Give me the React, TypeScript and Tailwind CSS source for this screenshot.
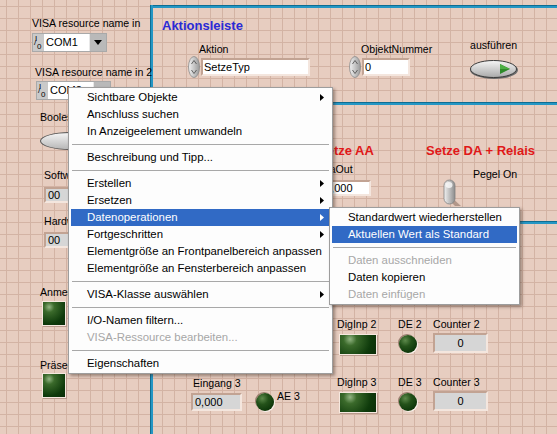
import React from "react";

type MenuEntry =
  | { kind: "item"; label: string; arrow?: boolean; active?: boolean; disabled?: boolean }
  | { kind: "sep" };

const mainMenu: MenuEntry[] = [
  { kind: "item", label: "Sichtbare Objekte", arrow: true },
  { kind: "item", label: "Anschluss suchen" },
  { kind: "item", label: "In Anzeigeelement umwandeln" },
  { kind: "sep" },
  { kind: "item", label: "Beschreibung und Tipp..." },
  { kind: "sep" },
  { kind: "item", label: "Erstellen", arrow: true },
  { kind: "item", label: "Ersetzen", arrow: true },
  { kind: "item", label: "Datenoperationen", arrow: true, active: true },
  { kind: "item", label: "Fortgeschritten", arrow: true },
  { kind: "item", label: "Elementgröße an Frontpanelbereich anpassen" },
  { kind: "item", label: "Elementgröße an Fensterbereich anpassen" },
  { kind: "sep" },
  { kind: "item", label: "VISA-Klasse auswählen", arrow: true },
  { kind: "sep" },
  { kind: "item", label: "I/O-Namen filtern..." },
  { kind: "item", label: "VISA-Ressource bearbeiten...", disabled: true },
  { kind: "sep" },
  { kind: "item", label: "Eigenschaften" },
];

const subMenu: MenuEntry[] = [
  { kind: "item", label: "Standardwert wiederherstellen" },
  { kind: "item", label: "Aktuellen Wert als Standard", active: true },
  { kind: "sep" },
  { kind: "item", label: "Daten ausschneiden", disabled: true },
  { kind: "item", label: "Daten kopieren" },
  { kind: "item", label: "Daten einfügen", disabled: true },
];

function MenuList({ entries }: { entries: MenuEntry[] }) {
  return (
    <div className="flex flex-col">
      {entries.map((entry, i) =>
        entry.kind === "sep" ? (
          <div key={i} className="flex h-[9px] items-center px-[3px]">
            <div className="h-px w-full bg-[#a8a8a8]" />
          </div>
        ) : (
          <div
            key={i}
            className={`mx-[2px] flex h-[17px] items-center justify-between pl-[16px] pr-[6px] text-[11.4px] ${
              entry.active ? "bg-[#316ac5] text-white" : entry.disabled ? "text-[#a7a7a7]" : "text-black"
            }`}
          >
            <span className="whitespace-nowrap">{entry.label}</span>
            {entry.arrow ? (
              <svg width="4" height="7" viewBox="0 0 4 7">
                <path d="M0 0 L4 3.5 L0 7 Z" fill={entry.active ? "#fff" : "#000"} />
              </svg>
            ) : null}
          </div>
        )
      )}
    </div>
  );
}

function Spin() {
  return (
    <svg width="12" height="22" viewBox="0 0 12 22">
      <defs>
        <linearGradient id="spg" x1="0" x2="1">
          <stop offset="0" stopColor="#f2f2f2" />
          <stop offset="1" stopColor="#9a9a9a" />
        </linearGradient>
      </defs>
      <ellipse cx="6" cy="11" rx="5.5" ry="10.5" fill="url(#spg)" stroke="#8a8a8a" strokeWidth="0.8" />
      <path d="M3.5 8 L6 4.5 L8.5 8" fill="none" stroke="#555" strokeWidth="0.9" />
      <path d="M3.5 14 L6 17.5 L8.5 14" fill="none" stroke="#555" strokeWidth="0.9" />
    </svg>
  );
}

function VisaControl({ text }: { text: string }) {
  return (
    <div className="flex h-[19px] w-max shrink-0 border border-[#a9a9a9] bg-[#c9c9c9]">
      <div className="relative w-[11px] text-[8px] leading-none text-black">
        <span className="absolute left-[2px] top-[1px]">I</span>
        <span className="absolute left-[1px] top-[5px]">/</span>
        <span className="absolute left-[4px] top-[9px]">0</span>
      </div>
      <div className="flex w-[45px] items-center bg-white pl-[2px] text-[11px]">{text}</div>
      <div className="flex w-[17px] items-center justify-center border-l border-[#e8e8e8] bg-[#b9b9b9]">
        <svg width="8" height="5" viewBox="0 0 8 5">
          <path d="M0 0 L8 0 L4 5 Z" fill="#000" />
        </svg>
      </div>
    </div>
  );
}

function SquareLed({ className }: { className: string }) {
  return (
    <div
      className={`shrink-0 border border-[#f6e8df] bg-[radial-gradient(circle_at_28%_22%,#93b583_0%,#3b6a2b_22%,#0e3a0b_70%,#0a2d08_100%)] shadow-[1px_1px_0_#b89a8c] ${className}`}
    />
  );
}

function RoundLed() {
  return (
    <div className="h-[18px] w-[18px] shrink-0 rounded-full bg-[radial-gradient(circle_at_35%_30%,#5d8a4b_0%,#24521a_35%,#0a3308_80%)] shadow-[1px_1px_0_#f8f0ea,-1px_-1px_0_#9c7e70]" />
  );
}

function Box({ children, className, white }: { children: React.ReactNode; className: string; white?: boolean }) {
  return (
    <div
      className={`flex shrink-0 items-center border-2 border-b-[#f4e6de] border-l-[#c2a393] border-r-[#f4e6de] border-t-[#c2a393] text-[11px] ${
        white ? "bg-white pl-[1px]" : "bg-[#d6d6d6]"
      } ${className}`}
    >
      {children}
    </div>
  );
}

function Label({ children, className = "" }: { children: React.ReactNode; className?: string }) {
  return <div className={`whitespace-nowrap text-[10.6px] leading-[13px] ${className}`}>{children}</div>;
}

function Line({ className }: { className: string }) {
  return <div className={`absolute border-[#0f6d92] bg-[#2596c4] ${className}`} />;
}

export default function App() {
  return (
    <div className="relative h-[434px] w-[557px] overflow-hidden bg-[#e7cdc0] font-['Liberation_Sans',Arial,sans-serif] text-black [background-image:linear-gradient(to_right,#d3b3a4_1px,transparent_1px),linear-gradient(to_bottom,#d3b3a4_1px,transparent_1px)] [background-position:6px_6px] [background-size:12px_12px]">
      {/* frame of the action bar */}
      <Line className="left-[150px] top-[5px] h-[3px] w-[407px] border-t" />
      <Line className="left-[150px] top-[5px] h-[429px] w-[3px] border-l" />
      <Line className="left-[150px] top-[102px] h-[3px] w-[407px] border-t" />
      <Line className="left-[150px] top-[221px] h-[3px] w-[407px] border-t" />

      {/* left column */}
      <div className="absolute left-[32px] top-[17px] flex flex-col items-start gap-[3px]">
        <Label>VISA resource name in</Label>
        <VisaControl text="COM1" />
      </div>
      <div className="absolute left-[35px] top-[66px] flex flex-col items-start gap-[2px]">
        <Label>VISA resource name in 2</Label>
        <div className="ml-px">
          <VisaControl text="COM2" />
        </div>
      </div>
      <div className="absolute left-[40px] top-[111px] flex flex-col items-start gap-[8px]">
        <Label>Boolesch</Label>
        <div className="h-[18px] w-[60px] rounded-[50%] border border-[#555] bg-[linear-gradient(to_bottom,#f4f4f4,#b8b8b8)]" />
      </div>
      <div className="absolute left-[44px] top-[169px] flex flex-col items-start gap-[5px]">
        <Label>Softwareversion</Label>
        <Box className="h-[16px] w-[40px] pl-[2px]">00</Box>
      </div>
      <div className="absolute left-[44px] top-[215px] flex flex-col items-start gap-[4px]">
        <Label>Hardwareversion</Label>
        <Box className="h-[16px] w-[40px] pl-[2px]">00</Box>
      </div>
      <div className="absolute left-[40px] top-[286px] flex flex-col items-start gap-[2px]">
        <Label>Anmeldung</Label>
        <SquareLed className="ml-[2px] h-[25px] w-[24px]" />
      </div>
      <div className="absolute left-[40px] top-[359px] flex flex-col items-start gap-px">
        <Label>Präsenz</Label>
        <SquareLed className="ml-[2px] h-[25px] w-[24px]" />
      </div>

      {/* action bar */}
      <div className="absolute left-[162px] top-[18px] text-[13px] font-bold leading-[15px] text-[#2a2ad6]">
        Aktionsleiste
      </div>
      <div className="absolute left-[188px] top-[43px] flex items-start gap-[39px]">
        <div className="flex flex-col">
          <Label className="ml-[11px]">Aktion</Label>
          <div className="flex items-center gap-px">
            <Spin />
            <Box white className="h-[18px] w-[109px]">SetzeTyp</Box>
          </div>
        </div>
        <div className="flex flex-col">
          <Label className="ml-[12px]">ObjektNummer</Label>
          <div className="flex items-center gap-px">
            <Spin />
            <Box white className="h-[18px] w-[48px]">0</Box>
          </div>
        </div>
      </div>
      <div className="absolute left-[469px] top-[39px] flex flex-col gap-[7px]">
        <Label className="ml-px">ausführen</Label>
        <svg width="50" height="21" viewBox="0 0 50 21">
          <defs>
            <linearGradient id="btg" x1="0" y1="0" x2="0" y2="1">
              <stop offset="0" stopColor="#f6f6f6" />
              <stop offset="1" stopColor="#a9a9a9" />
            </linearGradient>
          </defs>
          <ellipse cx="25" cy="11" rx="24" ry="9" fill="#6d6d6d" />
          <ellipse cx="24.5" cy="10" rx="23" ry="8.5" fill="url(#btg)" stroke="#3c3c3c" strokeWidth="1" />
          <path d="M31 5 L41 10 L31 15 Z" fill="#2f8a2a" />
          <path d="M31 5 L41 10 L31 10 Z" fill="#4cae45" />
        </svg>
      </div>

      {/* analog / digital outputs */}
      <div className="absolute left-[318px] top-[143px] whitespace-nowrap text-[13px] font-bold leading-[15px] text-[#e01818]">
        Setze AA
      </div>
      <div className="absolute left-[426px] top-[143px] text-[13px] font-bold leading-[15px] text-[#e01818]">
        Setze DA + Relais
      </div>
      <div className="absolute left-[322px] top-[163px] flex flex-col items-start gap-[4px]">
        <Label>DaOut</Label>
        <Box white className="h-[16px] w-[49px]">0,000</Box>
      </div>
      <Label className="absolute left-[473px] top-[168px]">Pegel On</Label>
      <svg className="absolute left-[441px] top-[178px]" width="22" height="30" viewBox="0 0 22 30">
        <defs>
          <linearGradient id="tgg" x1="0" x2="1">
            <stop offset="0" stopColor="#f2f2f2" />
            <stop offset="1" stopColor="#8c8c8c" />
          </linearGradient>
        </defs>
        <path d="M9 18 L20 28 L14 28 L6 20 Z" fill="#9b8074" opacity="0.7" />
        <rect x="3" y="2" width="11" height="24" rx="5.5" fill="url(#tgg)" stroke="#808080" strokeWidth="0.8" />
        <ellipse cx="8" cy="7" rx="3.5" ry="3" fill="#fafafa" opacity="0.8" />
      </svg>

      {/* analog input */}
      <div className="absolute left-[191px] top-[377px] flex flex-col gap-[3px]">
        <Label className="ml-[2px]">Eingang 3</Label>
        <div className="flex items-center gap-[14px]">
          <Box className="h-[18px] w-[51px] pl-[2px]">0,000</Box>
          <RoundLed />
        </div>
      </div>
      <Label className="absolute left-[277px] top-[390px]">AE 3</Label>

      {/* digital inputs and counters */}
      <div className="absolute left-[337px] top-[318px] grid grid-cols-[61px_37px_56px] gap-y-[21px]">
        {[2, 3].map((n) => (
          <React.Fragment key={n}>
            <div className="flex flex-col items-start gap-[3px]">
              <Label>DigInp {n}</Label>
              <SquareLed className="ml-[2px] h-[21px] w-[38px]" />
            </div>
            <div className="flex flex-col items-start gap-[4px]">
              <Label>DE {n}</Label>
              <div className="ml-px">
                <RoundLed />
              </div>
            </div>
            <div className="flex flex-col items-start gap-[2px]">
              <Label className="ml-[-2px]">Counter {n}</Label>
              <Box className="-ml-[2px] h-[20px] w-[55px] justify-center">0</Box>
            </div>
          </React.Fragment>
        ))}
      </div>

      {/* context menu with the open submenu */}
      <div className="absolute left-[68px] top-[87px] w-[265px] border border-[#9d9d9d] bg-[#fdfdfd] py-px shadow-[2px_2px_3px_rgba(60,40,30,0.45)]">
        <MenuList entries={mainMenu} />
      </div>
      <div className="absolute left-[329px] top-[207px] w-[191px] border border-[#9d9d9d] bg-[#fdfdfd] py-px shadow-[2px_2px_3px_rgba(60,40,30,0.45)]">
        <MenuList entries={subMenu} />
      </div>
    </div>
  );
}
